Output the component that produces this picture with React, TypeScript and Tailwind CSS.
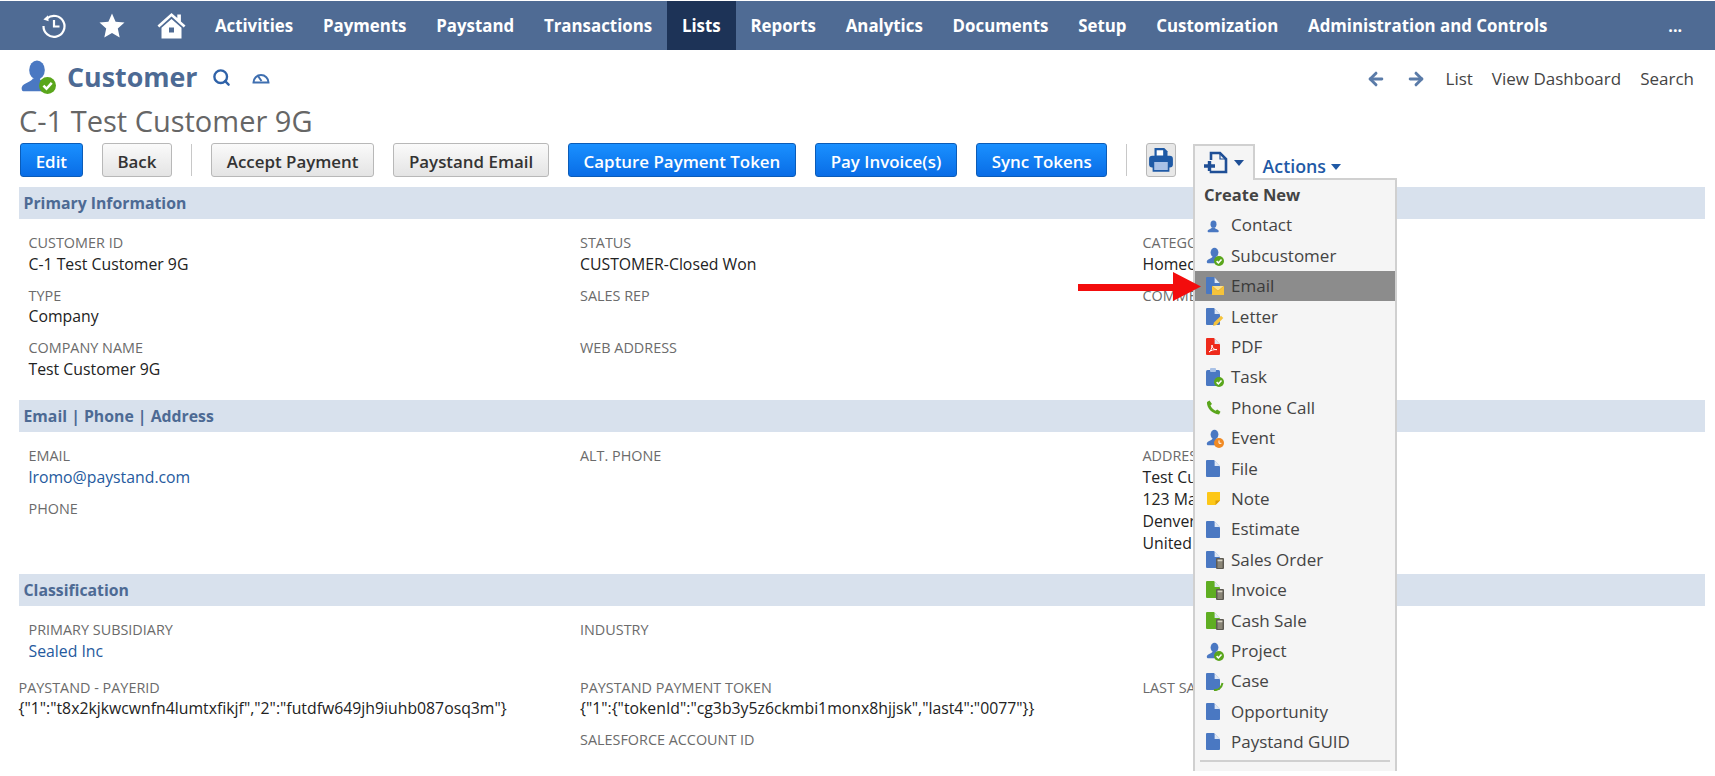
import type { ReactNode } from "react";
import { ArrowLeft, ArrowRight, Search } from "lucide-react";

const navItems = [
  "Activities",
  "Payments",
  "Paystand",
  "Transactions",
  "Lists",
  "Reports",
  "Analytics",
  "Documents",
  "Setup",
  "Customization",
  "Administration and Controls",
];

function HistoryIcon() {
  return (
    <svg width="26" height="26" viewBox="0 0 26 26" fill="none" stroke="#fff" strokeWidth="2.2">
      <path d="M6 5.5A10.5 10.5 0 1 1 2.5 13" />
      <path d="M2.4 6.5 7 2.2 7.6 8.2Z" fill="#fff" stroke="none" />
      <path d="M13 7v6.5h5.5" />
    </svg>
  );
}

function StarIcon() {
  return (
    <svg width="26" height="25" viewBox="0 0 26 25" fill="#fff">
      <path d="M13 0.5l3.6 8.2 8.9.9-6.7 6 1.9 8.8L13 19.9l-7.7 4.5 1.9-8.8-6.7-6 8.9-.9z" />
    </svg>
  );
}

function HomeIcon() {
  return (
    <svg width="29" height="27" viewBox="0 0 29 27" fill="#fff">
      <path d="M14.5 1 .5 13.5l1.8 1.9L14.5 4.6l12.2 10.8 1.8-1.9-4.6-4.1V2.5h-3.6v3.6z" />
      <path fillRule="evenodd" d="M14.5 7 4.5 15.8V26.5h20V15.8zM12 15.5h5v5h-5z" />
    </svg>
  );
}

function Person({ size = 20, color = "#4a78c2" }: { size?: number; color?: string }) {
  return (
    <svg width={size} height={size} viewBox="0 0 20 20" fill={color}>
      <ellipse cx="10" cy="6.5" rx="4.6" ry="5.6" />
      <path d="M7.5 11.5c-.2 1.8-5.8 2.6-6.5 5.2-.2.8.2 2.3 1 2.3h15c.8 0 1.2-1.5 1-2.3-.7-2.6-6.3-3.4-6.5-5.2z" />
    </svg>
  );
}

function CheckBadge({ size = 10 }: { size?: number }) {
  return (
    <svg width={size} height={size} viewBox="0 0 10 10" className="absolute right-0 bottom-0">
      <circle cx="5" cy="5" r="5" fill="#5aa61c" />
      <path d="M2.6 5.1 4.4 6.9 7.5 3.4" fill="none" stroke="#fff" strokeWidth="1.5" />
    </svg>
  );
}

function ClockBadge() {
  return (
    <svg width="10" height="10" viewBox="0 0 10 10" className="absolute right-0 bottom-0">
      <circle cx="5" cy="5" r="5" fill="#f08a24" />
      <path d="M5 2.4V5.3H7.4" fill="none" stroke="#fff" strokeWidth="1" />
    </svg>
  );
}

function DocShape({ color = "#4a78c2", width = 14, height = 17 }: { color?: string; width?: number; height?: number }) {
  return (
    <svg width={width} height={height} viewBox="0 0 14 17">
      <path d="M1 0H8L14 6.5V16a1 1 0 0 1-1 1H1a1 1 0 0 1-1-1V1a1 1 0 0 1 1-1Z" fill={color} />
      <path d="M8.6 0.6V6H13.6Z" fill="#dfe8f5" />
    </svg>
  );
}

function Calculator() {
  return (
    <svg width="8" height="11" viewBox="0 0 8 11" className="absolute right-0 bottom-0">
      <rect width="8" height="11" rx="1" fill="#5d5a52" />
      <rect x="1.5" y="1.5" width="5" height="2" fill="#d9d4c4" />
      <path d="M1.5 5h5M1.5 7h5M1.5 9h5" stroke="#b9b29c" strokeWidth="1" />
    </svg>
  );
}

function IconBox({ children }: { children: ReactNode }) {
  return <span className="relative flex h-[20px] w-[19px] items-center justify-center">{children}</span>;
}

const doc = (
  <IconBox>
    <span className="mr-[3px] flex">
      <DocShape />
    </span>
  </IconBox>
);

const personCheck = (
  <IconBox>
    <span className="mr-[1px] flex">
      <Person size={17} />
    </span>
    <CheckBadge />
  </IconBox>
);

const invoiceIcon = (
  <IconBox>
    <span className="mr-[3px] flex">
      <DocShape color="#5fae22" />
    </span>
    <Calculator />
  </IconBox>
);

const menuItems: { label: string; icon: ReactNode; active?: boolean }[] = [
  {
    label: "Contact",
    icon: (
      <IconBox>
        <span className="mr-[3px] mt-[3px] flex">
          <Person size={13} />
        </span>
      </IconBox>
    ),
  },
  { label: "Subcustomer", icon: personCheck },
  {
    label: "Email",
    active: true,
    icon: (
      <IconBox>
        <span className="mr-[3px] flex">
          <DocShape />
        </span>
        <svg width="12" height="9" viewBox="0 0 12 9" className="absolute right-0 bottom-[1px]">
          <rect width="12" height="9" fill="#f5c33b" />
          <path d="M0 0 6 5 12 0" fill="#fbe08a" stroke="#e0a51f" strokeWidth="0.6" />
        </svg>
      </IconBox>
    ),
  },
  {
    label: "Letter",
    icon: (
      <IconBox>
        <span className="mr-[3px] flex">
          <DocShape />
        </span>
        <svg width="11" height="11" viewBox="0 0 11 11" className="absolute right-0 bottom-0">
          <path d="M0 11 1 7.5 8 .8 10.3 3 3.5 10Z" fill="#f5c33b" />
        </svg>
      </IconBox>
    ),
  },
  {
    label: "PDF",
    icon: (
      <IconBox>
        <span className="relative mr-[3px] flex">
          <DocShape color="#ee2a1b" />
          <svg width="10" height="9" viewBox="0 0 10 9" className="absolute left-[2px] bottom-[2px]">
            <path d="M1 8c2-1 3-4 3-7 0 3 2 5 5 4.600-3-.2-6 .6-8 2.400Z" fill="none" stroke="#fff" strokeWidth="1" />
          </svg>
        </span>
      </IconBox>
    ),
  },
  {
    label: "Task",
    icon: (
      <IconBox>
        <span className="mr-[3px] flex">
          <svg width="14" height="18" viewBox="0 0 14 18">
            <rect y="2" width="14" height="16" rx="1.500" fill="#4a78c2" />
            <rect x="4" width="6" height="4" rx="1" fill="#a9c1e6" />
          </svg>
        </span>
        <CheckBadge />
      </IconBox>
    ),
  },
  {
    label: "Phone Call",
    icon: (
      <IconBox>
        <svg width="15" height="15" viewBox="0 0 15 15" className="mr-[3px]">
          <path d="M3.500.5 1 2C.4 7.500 6 14 13 14.500l1.500-2.700-3.300-2.300-1.700 1.300C7.500 10 5 7.500 4.500 5.300L6 4Z" fill="#5aa61c" />
        </svg>
      </IconBox>
    ),
  },
  {
    label: "Event",
    icon: (
      <IconBox>
        <span className="mr-[1px] flex">
          <Person size={17} />
        </span>
        <ClockBadge />
      </IconBox>
    ),
  },
  { label: "File", icon: doc },
  {
    label: "Note",
    icon: (
      <IconBox>
        <svg width="13" height="13" viewBox="0 0 13 13" className="mr-[3px]">
          <path d="M1 0H13V8.500L8.500 13H1a1 1 0 0 1-1-1V1a1 1 0 0 1 1-1Z" fill="#fdc717" />
          <path d="M8.500 13V8.500H13Z" fill="#d99d0b" />
        </svg>
      </IconBox>
    ),
  },
  { label: "Estimate", icon: doc },
  {
    label: "Sales Order",
    icon: (
      <IconBox>
        <span className="mr-[3px] flex">
          <DocShape />
        </span>
        <Calculator />
      </IconBox>
    ),
  },
  { label: "Invoice", icon: invoiceIcon },
  { label: "Cash Sale", icon: invoiceIcon },
  { label: "Project", icon: personCheck },
  {
    label: "Case",
    icon: (
      <IconBox>
        <span className="mr-[3px] flex">
          <DocShape />
        </span>
        <svg width="11" height="9" viewBox="0 0 11 9" className="absolute right-0 bottom-0">
          <path d="M1 8C5 8.500 8.500 6 9.500 1" fill="none" stroke="#5aa61c" strokeWidth="2" />
        </svg>
      </IconBox>
    ),
  },
  { label: "Opportunity", icon: doc },
  { label: "Paystand GUID", icon: doc },
];

function Field({ label, children, inset = true }: { label: string; children?: ReactNode; inset?: boolean }) {
  return (
    <div className={inset ? "mb-[9px] pl-[10px]" : "mb-[9px]"}>
      <div className="h-[21.5px] whitespace-nowrap text-[14.4px] leading-[21.5px] text-[#6b6b6b]">{label}</div>
      <div className="min-h-[22px] -translate-y-px whitespace-nowrap text-[15.8px] leading-[22px] text-[#222]">{children}</div>
    </div>
  );
}

function SectionBand({ title }: { title: string }) {
  return (
    <div className="flex h-[32px] items-center bg-[#d8e1ed] pl-[5px] pt-[1px] text-[15.8px] font-bold text-[#4d6a94]">
      {title}
    </div>
  );
}

function Section({ title, height, children }: { title: string; height: string; children: ReactNode }) {
  return (
    <section>
      <SectionBand title={title} />
      <div className={`${height} grid grid-cols-[561.5px_562.5px_1fr] pt-[13px]`}>{children}</div>
    </section>
  );
}

function Button({ label, primary }: { label: string; primary?: boolean }) {
  return (
    <button
      className={
        primary
          ? "h-[34px] rounded-[3px] border border-[#0b5cb8] bg-gradient-to-b from-[#1a90ff] to-[#0a6de6] px-[14.7px] pt-[3px] text-[16.9px] font-semibold text-white"
          : "h-[34px] rounded-[3px] border border-[#b8b8b8] bg-gradient-to-b from-[#fafafa] to-[#e4e4e4] px-[14.7px] pt-[3px] text-[16.9px] font-semibold text-[#333]"
      }
    >
      {label}
    </button>
  );
}

export default function App() {
  return (
    <div className="h-[776px] overflow-hidden bg-white font-['Open_Sans',sans-serif]">
      <div className="relative h-[771px] overflow-hidden">
        <nav className="mt-[1px] flex h-[49px] items-center bg-[#4f6b94] text-white">
          <div className="ml-[41px] flex w-[159px] items-center">
            <HistoryIcon />
            <span className="ml-[32px] flex">
              <StarIcon />
            </span>
            <span className="ml-[32px] flex">
              <HomeIcon />
            </span>
          </div>
          {navItems.map((item) => (
            <div
              key={item}
              className={
                item === "Lists"
                  ? "flex h-full items-center bg-[#1d3357] px-[14.9px] text-[16.85px] font-bold"
                  : "flex h-full items-center px-[14.9px] text-[16.85px] font-bold"
              }
            >
              {item}
            </div>
          ))}
          <div className="ml-auto mr-[33px] text-[16px] font-bold">...</div>
        </nav>

        <div className="flex h-[50px] items-center pl-[20px] pr-[21px]">
          <span className="relative mt-[2px] flex h-[36px] w-[36px] items-center">
            <Person size={34} />
            <CheckBadge size={17} />
          </span>
          <h1 className="ml-[11px] mt-[4px] text-[26.8px] font-bold text-[#4d6a94]">Customer</h1>
          <Search className="ml-[14px] mt-[5px]" size={19} color="#2f62a8" strokeWidth={3} />
          <svg width="18" height="13" viewBox="0 0 18 13" className="ml-[21px] mt-[5px]" fill="none" stroke="#3f6fb0" strokeWidth="2">
            <path d="M1.500 11.500a7.500 7.500 0 1 1 15 0Z" />
            <path d="M6 5l3.500 5" />
          </svg>
          <div className="ml-auto mt-[8px] flex items-center text-[17px] text-[#444]">
            <ArrowLeft size={20} color="#5a7ba8" strokeWidth={3.5} />
            <ArrowRight className="ml-[20px]" size={20} color="#5a7ba8" strokeWidth={3.5} />
            <span className="ml-[20px]">List</span>
            <span className="ml-[19px]">View Dashboard</span>
            <span className="ml-[19px]">Search</span>
          </div>
        </div>

        <div className="flex h-[43px] items-center pb-[2px] pl-[19px] text-[29px] text-[#666]">C-1 Test Customer 9G</div>

        <div className="flex h-[44px] items-start pl-[20px]">
          <div className="flex items-center gap-[19px]">
            <Button label="Edit" primary />
            <Button label="Back" />
            <div className="h-[32px] w-px bg-[#c8c8c8]" />
            <Button label="Accept Payment" />
            <Button label="Paystand Email" />
            <Button label="Capture Payment Token" primary />
            <Button label="Pay Invoice(s)" primary />
            <Button label="Sync Tokens" primary />
            <div className="h-[32px] w-px bg-[#c8c8c8]" />
            <div className="flex h-[34px] w-[30px] items-center justify-center rounded-[3px] border border-[#b8b8b8] bg-[#e8e8e8]">
              <svg width="26" height="26" viewBox="0 0 24 24">
                <path d="M6 1h9l3 3v6H6z" fill="#1f5aa6" />
                <path d="M8 3h6v5H8z" fill="#fff" />
                <rect x="1" y="8" width="22" height="11" rx="3" fill="#1f5aa6" />
                <path d="M5 13h14v9H5z" fill="#a9c1e6" stroke="#1f5aa6" strokeWidth="1.500" />
              </svg>
            </div>
          </div>
          <div className="z-20 ml-auto mt-[1px] flex h-[36px] w-[62px] items-center justify-center gap-[5px] border-2 border-b-0 border-[#d0d0d0] bg-[#f5f5f5]">
            <svg width="26" height="24" viewBox="0 0 26 24" fill="none" stroke="#1f4f96" strokeWidth="2.600">
              <path d="M8 9V2h9l6 6v13H8v-1" />
              <path d="M17 2v6h6" strokeWidth="1.200" />
              <path d="M1 15h11M6.500 10v10" strokeWidth="3.400" />
            </svg>
            <span className="h-0 w-0 border-x-[5px] border-t-[6px] border-x-transparent border-t-[#1f4f96]" />
          </div>
          <div className="ml-[8px] mr-[374px] mt-[10px] flex items-center gap-[5px] text-[17.8px] font-semibold text-[#1f5aa6]">
            Actions
            <span className="mt-[2px] h-0 w-0 border-x-[5px] border-t-[6px] border-x-transparent border-t-[#1f5aa6]" />
          </div>
        </div>

        <div className="pl-[18.5px] pr-[10px]">
          <Section title="Primary Information" height="h-[181px]">
            <div>
              <Field label="CUSTOMER ID">C-1 Test Customer 9G</Field>
              <Field label="TYPE">Company</Field>
              <Field label="COMPANY NAME">Test Customer 9G</Field>
            </div>
            <div>
              <Field label="STATUS" inset={false}>CUSTOMER-Closed Won</Field>
              <Field label="SALES REP" inset={false} />
              <Field label="WEB ADDRESS" inset={false} />
            </div>
            <div>
              <Field label="CATEGORY" inset={false}>Homecare</Field>
              <Field label="COMMENTS" inset={false} />
            </div>
          </Section>
          <Section title="Email | Phone | Address" height="h-[142px]">
            <div>
              <Field label="EMAIL">
                <span className="text-[#255a9e]">lromo@paystand.com</span>
              </Field>
              <Field label="PHONE" />
            </div>
            <div>
              <Field label="ALT. PHONE" inset={false} />
            </div>
            <div>
              <div className="h-[21.5px] text-[14.4px] leading-[21.5px] text-[#6b6b6b]">ADDRESS</div>
              <div className="-translate-y-px whitespace-nowrap text-[15.8px] leading-[22px] text-[#222]">
                <div>Test Customer</div>
                <div>123 Main St</div>
                <div>Denver CO</div>
                <div>United States</div>
              </div>
            </div>
          </Section>
          <Section title="Classification" height="h-[164px]">
            <div>
              <div className="mb-[14px]">
                <Field label="PRIMARY SUBSIDIARY">
                  <span className="text-[#255a9e]">Sealed Inc</span>
                </Field>
              </div>
              <Field label="PAYSTAND - PAYERID" inset={false}>
                {'{"1":"t8x2kjkwcwnfn4lumtxfikjf","2":"futdfw649jh9iuhb087osq3m"}'}
              </Field>
            </div>
            <div>
              <div className="mb-[14px]">
                <Field label="INDUSTRY" inset={false} />
              </div>
              <Field label="PAYSTAND PAYMENT TOKEN" inset={false}>
                {'{"1":{"tokenId":"cg3b3y5z6ckmbi1monx8hjjsk","last4":"0077"}}'}
              </Field>
              <Field label="SALESFORCE ACCOUNT ID" inset={false} />
            </div>
            <div>
              <div className="h-[57.5px]" />
              <Field label="LAST SALES ACTIVITY" inset={false} />
            </div>
          </Section>
        </div>

        <div className="absolute left-[1193px] top-[178px] z-10 w-[204px] border-2 border-[#d0d0d0] bg-[#f5f5f5]">
          <div className="flex h-[30px] items-center pl-[9px] text-[16.5px] font-bold text-[#444]">Create New</div>
          {menuItems.map((item) => (
            <div
              key={item.label}
              className={
                item.active
                  ? "flex h-[30.4px] items-center bg-[#8c8c8c] pl-[10px] text-[17px] text-[#3a3a3a]"
                  : "flex h-[30.4px] items-center pl-[10px] text-[17px] text-[#444]"
              }
            >
              {item.icon}
              <span className="ml-[7px]">{item.label}</span>
            </div>
          ))}
          <div className="mx-[5px] mt-[3px] h-[2px] bg-[#d0d0d0]" />
          <div className="mt-[3px] flex h-[30px] items-center pl-[37px] text-[17px] text-[#444]">Customize</div>
        </div>

        <svg width="124" height="30" viewBox="0 0 124 30" className="absolute left-[1078px] top-[272px] z-30">
          <path d="M0 12H95V0L123 14.500 95 29V19H0Z" fill="#f30d0d" />
        </svg>
      </div>
    </div>
  );
}
